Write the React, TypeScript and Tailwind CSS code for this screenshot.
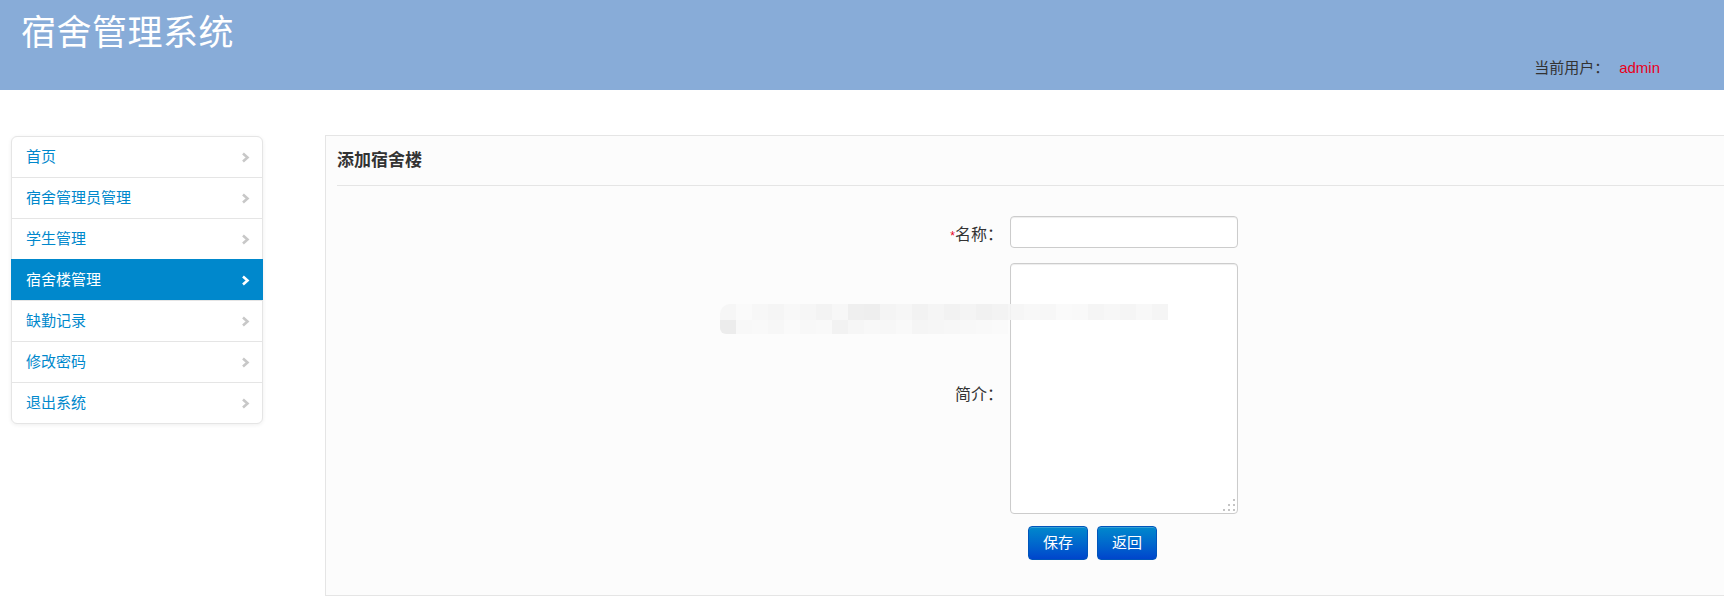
import React from "react";

const navItems = ["首页", "宿舍管理员管理", "学生管理", "宿舍楼管理", "缺勤记录", "修改密码", "退出系统"];

const row1 = [
  "bg-[#f6f6f6]", "bg-[#fafafa]", "bg-[#f7f7f7]", "bg-[#f5f5f5]", "bg-[#f8f8f8]", "bg-[#f6f6f6]", "bg-[#f3f3f3]",
  "bg-[#f7f7f7]", "bg-[#eeeeee]", "bg-[#ededed]", "bg-[#f4f4f4]", "bg-[#f6f6f6]", "bg-[#f2f2f2]", "bg-[#f5f5f5]",
  "bg-[#f1f1f1]", "bg-[#f4f4f4]", "bg-[#f0f0f0]", "bg-[#f3f3f3]", "bg-[#f6f6f6]", "bg-[#f8f8f8]", "bg-[#f7f7f7]",
  "bg-[#fafafa]", "bg-[#f9f9f9]", "bg-[#f5f5f5]", "bg-[#f7f7f7]", "bg-[#f4f4f4]", "bg-[#f8f8f8]", "bg-[#f5f5f5]",
];
const row2 = [
  "bg-[#ebebeb]", "bg-[#f8f8f8]", "bg-[#f9f9f9]", "bg-[#f7f7f7]", "bg-[#fafafa]", "bg-[#f8f8f8]", "bg-[#f9f9f9]",
  "bg-[#f2f2f2]", "bg-[#f6f6f6]", "bg-[#f8f8f8]", "bg-[#f7f7f7]", "bg-[#f9f9f9]", "bg-[#f5f5f5]", "bg-[#f6f6f6]",
  "bg-[#f7f7f7]", "bg-[#f8f8f8]", "bg-[#f9f9f9]", "bg-[#fafafa]",
];

function Chevron({ active }: { active: boolean }) {
  return (
    <svg width="9" height="11" viewBox="0 0 9 11" className="shrink-0">
      <polyline
        points="2,1.5 6.5,5.5 2,9.5"
        fill="none"
        stroke={active ? "#ffffff" : "#c8c8c8"}
        strokeWidth="2.6"
        strokeLinejoin="miter"
      />
    </svg>
  );
}

function Grip() {
  return (
    <svg width="14" height="14" viewBox="0 0 14 14" className="pointer-events-none absolute bottom-[2px] right-[2px]">
      <rect x="11" y="1" width="2" height="2" fill="#c4c4c4" />
      <rect x="6" y="6" width="2" height="2" fill="#c4c4c4" />
      <rect x="11" y="6" width="2" height="2" fill="#c4c4c4" />
      <rect x="1" y="11" width="2" height="2" fill="#c4c4c4" />
      <rect x="6" y="11" width="2" height="2" fill="#c4c4c4" />
      <rect x="11" y="11" width="2" height="2" fill="#c4c4c4" />
    </svg>
  );
}

export default function App() {
  return (
    <div
      className="min-h-[609px] w-full overflow-hidden bg-white text-[#333]"
      style={{ fontFamily: '"Liberation Sans", "Noto Sans CJK SC", sans-serif' }}
    >
      {/* Header */}
      <div className="flex h-[90px] flex-col bg-[#88acd8]">
        <div className="pl-[21px] pt-[13px] text-[35px] leading-[40px] tracking-[0.5px] text-white">宿舍管理系统</div>
        <div className="mt-[5px] flex justify-end pr-[64px] text-[15px] leading-[20px]">
          <span className="text-[#333]">当前用户：</span>
          <span className="ml-[10px] text-[#e8001c]">admin</span>
        </div>
      </div>

      {/* Content */}
      <div className="mt-[45px] flex items-start">
        {/* Sidebar */}
        <div className="ml-[11px] mt-px w-[252px] shrink-0 rounded-[6px] border border-[#e5e5e5] bg-white shadow-[0_1px_4px_rgba(0,0,0,0.065)]">
          {navItems.map((item, i) => {
            const active = item === "宿舍楼管理";
            return (
              <div
                key={item}
                className={
                  active
                    ? "relative -mx-px flex h-[41px] items-center justify-between border-t border-[#0088cc] bg-[#0088cc] pl-[15px] pr-[13px] text-[15px] text-white"
                    : i === 0
                    ? "flex h-[40px] items-center justify-between pl-[14px] pr-[12px] text-[15px] text-[#0088cc]"
                    : "flex h-[41px] items-center justify-between border-t border-[#e5e5e5] pl-[14px] pr-[12px] text-[15px] text-[#0088cc]"
                }
              >
                <span>{item}</span>
                <Chevron active={active} />
              </div>
            );
          })}
        </div>

        {/* Main panel */}
        <div className="relative ml-[62px] mr-[-20px] h-[461px] flex-1 border border-[#e5e5e5] bg-[#fcfcfc]">
          <div className="pl-[11px]">
            <div className="flex h-[50px] items-center border-b border-[#e5e5e5] text-[17px] font-bold text-[#333]">
              添加宿舍楼
            </div>
          </div>

          <div className="mt-[30px] flex flex-col">
            <div className="flex items-center">
              <div className="w-[684px] pr-[7px] pt-[5px] text-right text-[16px] text-[#333]">
                <span className="text-[12px] text-[#e8001c]">*</span>名称：
              </div>
              <input
                type="text"
                className="h-[32px] w-[228px] rounded-[4px] border border-[#cccccc] bg-white px-[6px] shadow-[inset_0_1px_1px_rgba(0,0,0,0.075)] outline-none"
              />
            </div>
            <div className="mt-[15px] flex items-center">
              <div className="w-[684px] pr-[7px] pt-[13px] text-right text-[16px] text-[#333]">简介：</div>
              <div className="relative">
                <textarea className="block h-[251px] w-[228px] resize-none rounded-[4px] border border-[#cccccc] bg-white px-[6px] shadow-[inset_0_1px_1px_rgba(0,0,0,0.075)] outline-none" />
                <Grip />
              </div>
            </div>
            <div className="mt-[12px] flex gap-[9px] pl-[702px]">
              <button className="h-[34px] w-[60px] rounded-[4px] border border-[#0055bb] bg-gradient-to-b from-[#0088cc] to-[#0044cc] text-[15px] text-white shadow-[inset_0_1px_0_rgba(255,255,255,0.2)]">
                保存
              </button>
              <button className="h-[34px] w-[60px] rounded-[4px] border border-[#0055bb] bg-gradient-to-b from-[#0088cc] to-[#0044cc] text-[15px] text-white shadow-[inset_0_1px_0_rgba(255,255,255,0.2)]">
                返回
              </button>
            </div>
          </div>

          {/* Pixelated redaction overlay */}
          <div className="absolute left-[394px] top-[168px] flex flex-col opacity-90">
            <div className="flex">
              {row1.map((c, i) => (
                <div key={i} className={`h-[16px] w-[16px] ${c} ${i === 0 ? "rounded-tl-[10px]" : ""}`} />
              ))}
            </div>
            <div className="flex">
              {row2.map((c, i) => (
                <div key={i} className={`h-[14px] w-[16px] ${c} ${i === 0 ? "rounded-bl-[6px]" : ""}`} />
              ))}
            </div>
          </div>
        </div>
      </div>
    </div>
  );
}
